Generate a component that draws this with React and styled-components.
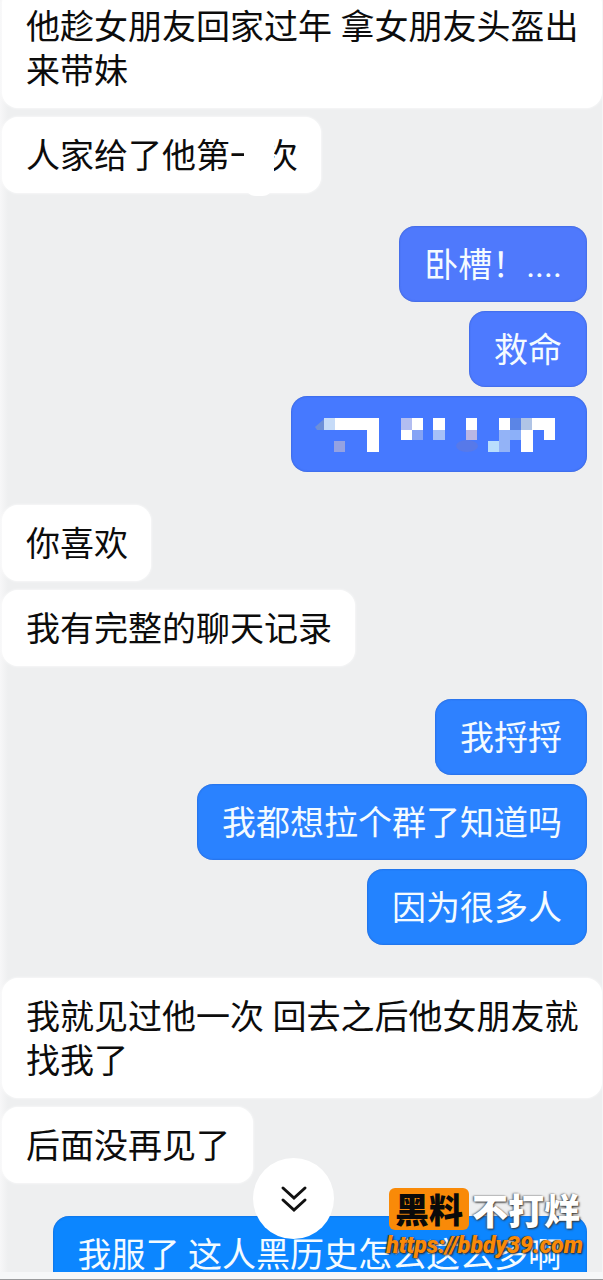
import React from "react";
import styled, { createGlobalStyle } from 'styled-components';

const GlobalStyle = createGlobalStyle`
  * {
    box-sizing: border-box;
  }
  body {
    margin: 0;
    background: #eeeff0;
    font-family: Roboto, "Noto Sans CJK SC", sans-serif;
  }
`;

const conversation = [
    {
        side: 'left',
        items: [
            { text: '他趁女朋友回家过年 拿女朋友头盔出来带妹' },
            { text: '人家给了他第', smudged: '一次' },
        ],
    },
    {
        side: 'right',
        items: [
            { text: '卧槽！....', tone: '#4f79fc' },
            { text: '救命', tone: '#4d7aff' },
            { mosaic: true, tone: '#4679ff' },
        ],
    },
    {
        side: 'left',
        items: [
            { text: '你喜欢' },
            { text: '我有完整的聊天记录' },
        ],
    },
    {
        side: 'right',
        items: [
            { text: '我捋捋', tone: '#2e81ff' },
            { text: '我都想拉个群了知道吗', tone: '#2a82ff' },
            { text: '因为很多人', tone: '#2383ff' },
        ],
    },
    {
        side: 'left',
        items: [
            { text: '我就见过他一次 回去之后他女朋友就找我了' },
            { text: '后面没再见了' },
        ],
    },
    {
        side: 'right',
        items: [
            { text: '我服了 这人黑历史怎么这么多啊', tone: '#0c86ff' },
        ],
    },
];

// x, y, width, height, colour
const blocks = [
    [8, 6, 11, 12, '#c6dbf8'],
    [19, 6, 44, 12, '#fff'],
    [51, 18, 12, 22, '#fff'],
    [18, 29, 11, 11, '#94a2e2'],
    [85, 6, 11, 12, '#b2bdf1'],
    [96, 6, 11, 12, '#fff'],
    [85, 18, 11, 10, '#fff'],
    [96, 18, 11, 10, '#85a3f5'],
    [117, 6, 12, 12, '#fff'],
    [117, 18, 12, 10, '#a6c0f8'],
    [150, 6, 11, 12, '#fff'],
    [150, 18, 11, 10, '#b9b6e4'],
    [183, 6, 11, 12, '#fff'],
    [183, 18, 11, 22, '#93b3f7'],
    [172, 29, 11, 11, '#b9defd'],
    [194, 6, 11, 12, '#5b85e6'],
    [194, 18, 11, 10, '#8cb0f9'],
    [205, 6, 11, 12, '#b0c4e6'],
    [205, 18, 12, 22, '#fff'],
    [216, 6, 23, 12, '#fff'],
    [228, 18, 11, 10, '#fff'],
];

function Mosaic() {
    return (
        <MosaicSvg width="246" height="44" viewBox="0 1 246 44" aria-hidden="true">
            <path d="M-1 15 L8 7 V18 H1 Z" fill="#6d8fd8" />
            <ellipse cx="151" cy="34" rx="11" ry="6" fill="#5b79e4" opacity="0.8" />
            {blocks.map(([x, y, w, h, fill]) => (
                <rect key={`${x}-${y}`} x={x} y={y} width={w} height={h} fill={fill} />
            ))}
        </MosaicSvg>
    );
}

export default function App() {
    return (
        <Screen>
            <GlobalStyle />
            <Chat>
                {conversation.map((group, i) => (
                    <Group key={i} $side={group.side}>
                        {group.items.map((item, j) => {
                            if (group.side === 'left') {
                                return (
                                    <Received key={j}>
                                        {item.text}
                                        {item.smudged && <Smudged>{item.smudged}</Smudged>}
                                    </Received>
                                );
                            }
                            return (
                                <Sent key={j} $tone={item.tone}>
                                    {item.mosaic ? <Mosaic /> : item.text}
                                </Sent>
                            );
                        })}
                    </Group>
                ))}
            </Chat>
            <BottomBar />

            <ScrollButton type="button" aria-label="回到底部">
                <svg width="28" height="28" viewBox="0 0 28 28" fill="none" stroke="#111" strokeWidth="3" strokeLinecap="round" strokeLinejoin="miter">
                    <path d="M3 3 L14 13 L25 3" />
                    <path d="M3 15 L14 25 L25 15" />
                </svg>
            </ScrollButton>

            <Watermark>
                <Brand>
                    <Badge>黑料</Badge>
                    <BrandName>不打烊</BrandName>
                </Brand>
                <SiteLink href="https://bbdy39.com">https://bbdy39.com</SiteLink>
            </Watermark>
        </Screen>
    );
}

const Screen = styled.div`
  position: relative;
  display: flex;
  flex-direction: column;
  height: 100vh;
  overflow: hidden;
  background: linear-gradient(to right, #f7f7f8, #eeeff0 8px);
`;

const Chat = styled.main`
  flex: 1;
  min-height: 0;
  overflow: hidden;
  display: flex;
  flex-direction: column;
  gap: 33px;
  margin-top: -12px;
  border-right: 1px solid #f5f5f6;
`;

const Group = styled.section`
  display: flex;
  flex-direction: column;
  flex-shrink: 0;
  gap: 9px;
  align-items: ${(props) => (props.$side === 'left' ? 'flex-start' : 'flex-end')};
  padding: ${(props) => (props.$side === 'left' ? '0 0 0 2px' : '0 15px 0 48px')};
`;

const Bubble = styled.div`
  border-radius: 16px;
  font-size: 34px;
  line-height: 44px;
`;

const Received = styled(Bubble)`
  padding: 17px 23px 15px 24px;
  background: #fff;
  color: #0c0c0c;
  box-shadow: 0 0 3px #fff;
`;

const Sent = styled(Bubble)`
  padding: 17px 25px 15px;
  background: ${(props) => props.$tone};
  color: #f4fbff;
  box-shadow: inset 0 0 2px rgba(30, 60, 150, 0.6);
`;

const Smudged = styled.span`
  position: relative;
  &::before {
    content: '';
    position: absolute;
    top: 0;
    left: 14px;
    width: 30px;
    height: 60px;
    border-radius: 0 0 12px 12px;
    background: #fff;
  }
`;

const MosaicSvg = styled.svg`
  display: block;
  overflow: visible;
`;

const BottomBar = styled.footer`
  flex-shrink: 0;
  height: 8px;
  background: #f6f7f8;
  border-bottom: 1px solid #9a9a9c;
`;

const ScrollButton = styled.button`
  position: absolute;
  left: 42%;
  bottom: 41px;
  display: flex;
  align-items: center;
  justify-content: center;
  width: 81px;
  height: 81px;
  padding: 0;
  border: none;
  border-radius: 50%;
  background: #fff;
  cursor: pointer;
`;

const Watermark = styled.div`
  position: absolute;
  right: 20px;
  bottom: 18px;
  display: flex;
  flex-direction: column;
  align-items: center;
`;

const Brand = styled.div`
  display: flex;
  align-items: center;
  gap: 3px;
  font-family: "Noto Sans CJK SC", sans-serif;
  font-weight: 900;
  line-height: 42px;
`;

const Badge = styled.span`
  padding: 0 6px;
  border-radius: 6px;
  background: #f98a08;
  color: #0a0a0a;
  font-size: 34px;
`;

const BrandName = styled.span`
  color: #fff;
  font-size: 36px;
  text-shadow: 1px 1px 2px #333, -1px 0 2px #555;
`;

const SiteLink = styled.a`
  color: #f98a08;
  font-size: 23px;
  font-style: italic;
  font-weight: 900;
  line-height: 32px;
  text-decoration: none;
  text-shadow: 1px 1px 2px #222, -1px 0 1px #333;
`;
